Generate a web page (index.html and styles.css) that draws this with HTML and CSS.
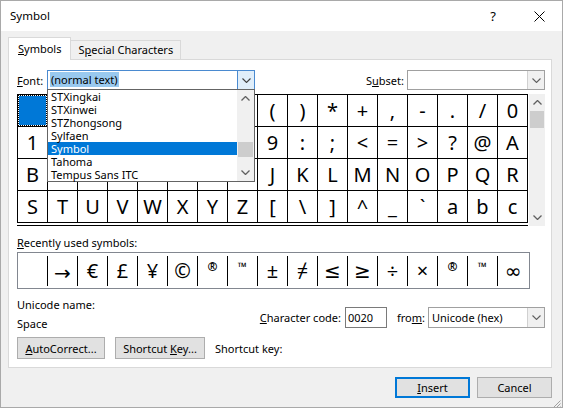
FILE: index.html
```html
<!DOCTYPE html>
<html>
<head>
<meta charset="utf-8">
<title>Symbol</title>
<link rel="stylesheet" href="styles.css">
</head>
<body>
<div class="window">
  <div class="titlebar">
    <div class="title">Symbol</div>
    <div class="tb-btn help">?</div>
    <div class="tb-btn close"><svg width="11" height="11" viewBox="0 0 11 11"><path d="M0.5 0.5L10.5 10.5M10.5 0.5L0.5 10.5" stroke="#000" stroke-width="1" fill="none"/></svg></div>
  </div>
  <div class="content">
    <div class="tabs">
      <div class="tab active"><span><u>S</u>ymbols</span></div>
      <div class="tab"><span>S<u>p</u>ecial Characters</span></div>
    </div>
    <div class="panel">
      <div class="font-row">
        <span class="font-lbl"><u>F</u>ont:</span>
        <div class="combo font-combo">
          <div class="combo-text"><span class="hl">(normal text)</span></div>
          <div class="combo-btn pressed"><svg width="9" height="5" viewBox="0 0 9 5"><path d="M0.5 0.5L4.5 4.5L8.5 0.5" fill="none" stroke="#404040" stroke-width="1.1"/></svg></div>
          <div class="dropdown">
            <div class="dd-list">
              <div class="dd-item">STXingkai</div>
              <div class="dd-item">STXinwei</div>
              <div class="dd-item">STZhongsong</div>
              <div class="dd-item">Sylfaen</div>
              <div class="dd-item sel">Symbol</div>
              <div class="dd-item">Tahoma</div>
              <div class="dd-item">Tempus Sans ITC</div>
            </div>
            <div class="dd-scroll">
              <div class="arrow"><svg width="9" height="5" viewBox="0 0 9 5"><path d="M0.5 4.5L4.5 0.5L8.5 4.5" fill="none" stroke="#606060" stroke-width="1.3"/></svg></div>
              <div class="dd-thumb"></div>
              <div class="fill"></div>
              <div class="arrow"><svg width="9" height="5" viewBox="0 0 9 5"><path d="M0.5 0.5L4.5 4.5L8.5 0.5" fill="none" stroke="#606060" stroke-width="1.3"/></svg></div>
            </div>
          </div>
        </div>
        <div class="spacer"></div>
        <span class="subset-lbl">S<u>u</u>bset:</span>
        <div class="combo subset-combo">
          <div class="combo-text"></div>
          <div class="combo-btn"><svg width="9" height="5" viewBox="0 0 9 5"><path d="M0.5 0.5L4.5 4.5L8.5 0.5" fill="none" stroke="#606060" stroke-width="1.1"/></svg></div>
        </div>
      </div>

      <div class="grid-area">
        <div class="grid-box">
          <div class="grid">
            <div class="cell"><div class="selcell"></div></div><div class="cell">!</div><div class="cell">"</div><div class="cell">#</div><div class="cell">$</div><div class="cell">%</div><div class="cell">&amp;</div><div class="cell">'</div><div class="cell">(</div><div class="cell">)</div><div class="cell">*</div><div class="cell">+</div><div class="cell">,</div><div class="cell">-</div><div class="cell">.</div><div class="cell">/</div><div class="cell">0</div>
            <div class="cell">1</div><div class="cell">2</div><div class="cell">3</div><div class="cell">4</div><div class="cell">5</div><div class="cell">6</div><div class="cell">7</div><div class="cell">8</div><div class="cell">9</div><div class="cell">:</div><div class="cell">;</div><div class="cell">&lt;</div><div class="cell">=</div><div class="cell">&gt;</div><div class="cell">?</div><div class="cell">@</div><div class="cell">A</div>
            <div class="cell">B</div><div class="cell">C</div><div class="cell">D</div><div class="cell">E</div><div class="cell">F</div><div class="cell">G</div><div class="cell">H</div><div class="cell">I</div><div class="cell">J</div><div class="cell">K</div><div class="cell">L</div><div class="cell">M</div><div class="cell">N</div><div class="cell">O</div><div class="cell">P</div><div class="cell">Q</div><div class="cell">R</div>
            <div class="cell">S</div><div class="cell">T</div><div class="cell">U</div><div class="cell">V</div><div class="cell">W</div><div class="cell">X</div><div class="cell">Y</div><div class="cell">Z</div><div class="cell">[</div><div class="cell">\</div><div class="cell">]</div><div class="cell">^</div><div class="cell">_</div><div class="cell">`</div><div class="cell">a</div><div class="cell">b</div><div class="cell">c</div>
          </div>
        </div>
        <div class="vscroll">
          <div class="arrow"><svg width="9" height="5" viewBox="0 0 9 5"><path d="M0.5 4.5L4.5 0.5L8.5 4.5" fill="none" stroke="#606060" stroke-width="1.3"/></svg></div>
          <div class="thumb"></div>
          <div class="fill"></div>
          <div class="arrow"><svg width="9" height="5" viewBox="0 0 9 5"><path d="M0.5 0.5L4.5 4.5L8.5 0.5" fill="none" stroke="#606060" stroke-width="1.3"/></svg></div>
        </div>
      </div>

      <div class="recent-lbl"><u>R</u>ecently used symbols:</div>
      <div class="recent">
        <div class="rc"></div><div class="rc arrowc">→</div><div class="rc">€</div><div class="rc">£</div><div class="rc">¥</div><div class="rc">©</div><div class="rc small">®</div><div class="rc small tm">™</div><div class="rc">±</div><div class="rc">≠</div><div class="rc">≤</div><div class="rc">≥</div><div class="rc">÷</div><div class="rc">×</div><div class="rc small">®</div><div class="rc small tm">™</div><div class="rc">∞</div>
      </div>

      <div class="info">
        <div class="uname">
          <div>Unicode name:</div>
          <div>Space</div>
        </div>
        <div class="spacer"></div>
        <div class="code-group">
          <span class="code-lbl"><u>C</u>haracter code:</span>
          <div class="input code">0020</div>
          <span class="from-lbl">fro<u>m</u>:</span>
          <div class="combo from-combo">
            <div class="combo-text">Unicode (hex)</div>
            <div class="combo-btn"><svg width="9" height="5" viewBox="0 0 9 5"><path d="M0.5 0.5L4.5 4.5L8.5 0.5" fill="none" stroke="#606060" stroke-width="1.1"/></svg></div>
          </div>
        </div>
      </div>

      <div class="btn-row">
        <div class="btn autocorrect"><span><u>A</u>utoCorrect...</span></div>
        <div class="btn shortcut"><span>Shortcut <u>K</u>ey...</span></div>
        <span class="sk">Shortcut key:</span>
      </div>
    </div>

    <div class="footer">
      <div class="btn dlg default"><span><u>I</u>nsert</span></div>
      <div class="btn dlg"><span>Cancel</span></div>
    </div>
  </div>
  <div class="grip"><svg width="10" height="10" viewBox="0 0 10 10"><path d="M9.5 2.5L2.5 9.5M9.5 5.5L5.5 9.5M9.5 8.5L8.5 9.5" stroke="#a0a0a0" stroke-width="1" fill="none"/></svg></div>
</div>
</body>
</html>
```

FILE: styles.css
```css
* { box-sizing: border-box; }
html, body { margin: 0; padding: 0; }
body {
  width: 563px;
  height: 408px;
  overflow: hidden;
  background: #f0f0f0;
  font-family: "Noto Sans", "Segoe UI", "DejaVu Sans", sans-serif;
  font-size: 11px;
  color: #000;
}
u { text-decoration: underline; text-underline-offset: 1px; }

.window {
  position: relative;
  width: 563px;
  height: 408px;
  border: 1px solid #a9a9a9;
  background: #f0f0f0;
  display: flex;
  flex-direction: column;
}

.titlebar {
  flex: none;
  height: 30px;
  background: #fff;
  display: flex;
  align-items: center;
}
.title { flex: 1; padding-left: 9px; line-height: 16px; font-size: 11.5px; }
.tb-btn {
  width: 46px;
  height: 30px;
  display: flex;
  align-items: center;
  justify-content: center;
}
.help { font-size: 13px; }

.content {
  flex: 1;
  display: flex;
  flex-direction: column;
  padding: 6px 10px 0 7px;
}

.tabs {
  height: 22px;
  display: flex;
  align-items: flex-end;
  position: relative;
  z-index: 1;
}
.tab {
  height: 19px;
  padding: 0 7px;
  border: 1px solid #d9d9d9;
  border-bottom: none;
  border-left: none;
  background: #f0f0f0;
  line-height: 18px;
}
.tab.active {
  height: 23px;
  margin-bottom: -1px;
  background: #fff;
  border-left: 1px solid #d9d9d9;
  padding: 0 9px;
  line-height: 22px;
}

.panel {
  height: 309px;
  background: #fff;
  border: 1px solid #d9d9d9;
  padding: 10px 6px 0 8px;
  display: flex;
  flex-direction: column;
}

.font-row {
  display: flex;
  align-items: center;
  height: 20px;
  position: relative;
  z-index: 2;
}
.font-lbl { width: 30px; }
.spacer { flex: 1; }
.subset-lbl { margin-right: 3px; }

.combo {
  position: relative;
  height: 20px;
  border: 1px solid #a0a0a0;
  display: flex;
  background: #fff;
}
.combo-text { flex: 1; padding-left: 2px; line-height: 18px; white-space: nowrap; }
.combo-btn {
  width: 17px;
  display: flex;
  align-items: center;
  justify-content: center;
  background: #f0f0f0;
  border-left: 1px solid #d0d0d0;
}
.font-combo { width: 208px; border-color: #4a8ad0; }
.font-combo .combo-btn.pressed { background: #e0eefa; border-left: 1px solid #4a8ad0; }
.hl { background: #99c9ef; padding: 0 1px; }
.subset-combo { width: 138px; }

.dropdown {
  position: absolute;
  left: -1px;
  top: 100%;
  width: 208px;
  height: 93px;
  border: 1px solid #646464;
  background: #fff;
  display: flex;
}
.dd-list { flex: 1; }
.dd-item { height: 13px; line-height: 13px; padding-left: 3px; white-space: nowrap; }
.dd-item.sel { background: #0078d7; color: #fff; }
.dd-scroll {
  width: 17px;
  background: #f0f0f0;
  display: flex;
  flex-direction: column;
}
.arrow { height: 17px; display: flex; align-items: center; justify-content: center; flex: none; }
.dd-thumb { height: 15px; margin: 35px 1px 0; background: #cdcdcd; }
.fill { flex: 1; }

.grid-area {
  display: flex;
  margin-top: 4px;
  height: 132px;
}
.grid-box {
  width: 511px;
  padding-bottom: 2px;
  border-bottom: 1px solid #000;
}
.grid {
  display: grid;
  grid-template-columns: repeat(17, 30px);
  border-top: 1px solid #000;
  border-left: 1px solid #000;
}
.cell {
  height: 32px;
  border-right: 1px solid #000;
  border-bottom: 1px solid #000;
  font-size: 20px;
  line-height: 31px;
  text-align: center;
}
.selcell {
  margin: 1px;
  height: 29px;
  background: #0078d7;
  outline: 1px dotted #000;
}
.vscroll {
  width: 17px;
  margin-left: 1px;
  background: #f0f0f0;
  display: flex;
  flex-direction: column;
}
.thumb { height: 17px; margin: 0 1px; background: #cdcdcd; }

.recent-lbl { margin-top: 9px; line-height: 16px; }
.recent {
  margin-top: 1px;
  width: 513px;
  height: 37px;
  border: 1px solid #828790;
  padding: 3px 0 2px;
  display: flex;
}
.rc {
  width: 30px;
  height: 30px;
  border-right: 1px solid #000;
  font-size: 20px;
  line-height: 30px;
  text-align: center;
}
.rc:last-child { border-right: none; }
.rc.small { font-size: 12px; line-height: 22px; font-weight: bold; }
.rc.arrowc { line-height: 34px; }

.info {
  margin-top: 8px;
  height: 35px;
  display: flex;
  align-items: flex-start;
}
.uname div { line-height: 16px; }
.uname div + div { margin-top: 3px; }
.code-group { display: flex; align-items: center; margin-top: 10px; }
.code-lbl { margin-right: 4px; }
.input {
  height: 21px;
  border: 1px solid #7a7a7a;
  background: #fff;
  padding-left: 2px;
  line-height: 19px;
}
.code { width: 42px; }
.from-lbl { margin-left: 10px; margin-right: 3px; }
.from-combo { width: 117px; height: 21px; }
.from-combo .combo-text { line-height: 19px; padding-left: 3px; }

.btn-row {
  margin-top: 5px;
  display: flex;
  align-items: center;
}
.btn {
  height: 22px;
  padding: 0 7px;
  border: 1px solid #adadad;
  background: #e1e1e1;
  display: flex;
  align-items: center;
  justify-content: center;
  white-space: nowrap;
}
.autocorrect { width: 88px; }
.shortcut { width: 90px; margin-left: 10px; }
.sk { margin-left: 10px; }

.footer {
  margin-top: 9px;
  display: flex;
  justify-content: flex-end;
  gap: 7px;
}
.btn.dlg { width: 75px; height: 21px; }
.btn.default { border: 2px solid #0078d7; }

.grip {
  position: absolute;
  right: 1px;
  bottom: 1px;
  width: 10px;
  height: 10px;
}
```
